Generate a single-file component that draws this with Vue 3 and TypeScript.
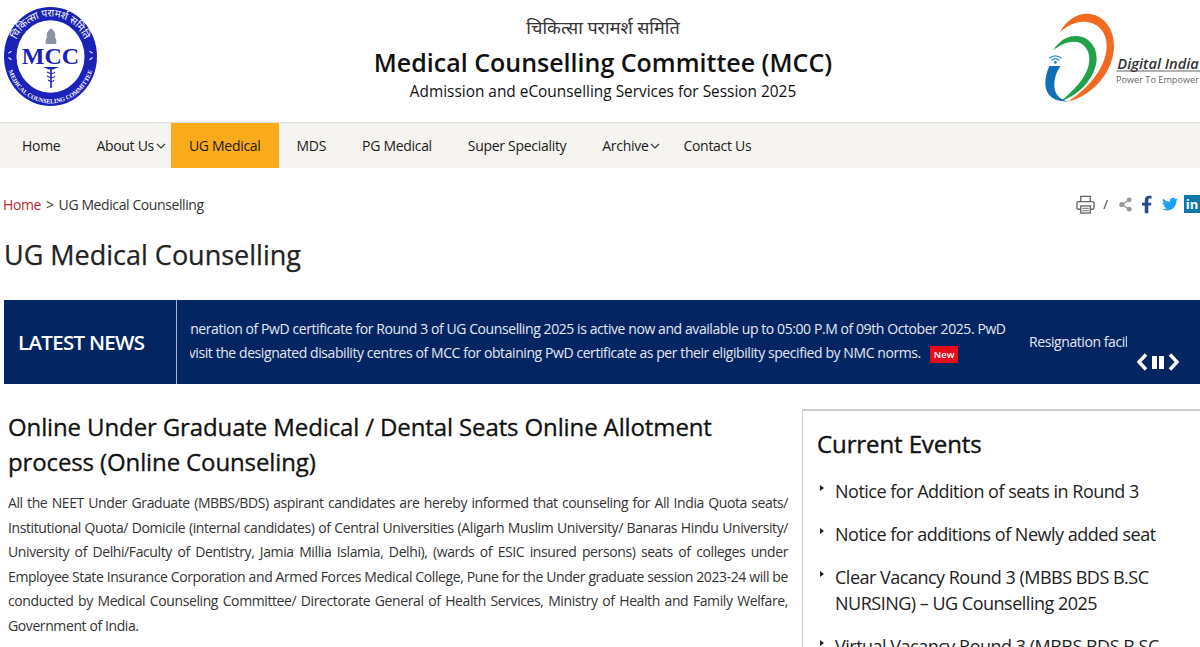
<script setup lang="ts">
const nav = [
  { label: 'Home' },
  { label: 'About Us', caret: true },
  { label: 'UG Medical', active: true },
  { label: 'MDS' },
  { label: 'PG Medical' },
  { label: 'Super Speciality' },
  { label: 'Archive', caret: true },
  { label: 'Contact Us' },
]
const events = [
  'Notice for Addition of seats in Round 3',
  'Notice for additions of Newly added seat',
  'Clear Vacancy Round 3 (MBBS BDS B.SC NURSING) – UG Counselling 2025',
  'Virtual Vacancy Round 3 (MBBS BDS B.SC NURSING) – UG Counselling 2025',
]
</script>

<template>
  <div class="page">
    <header class="head">
      <svg class="mcc" viewBox="0 0 100 110" width="100" height="110" role="img" aria-label="MCC logo">
        <defs>
          <path id="arcTop" d="M -37.500 0 A 37.500 37.500 0 0 1 37.500 0" />
          <path id="arcBottom" d="M -44 0 A 44 44 0 0 0 44 0" />
        </defs>
        <g transform="translate(50.500 56.500) scale(1 1.065)">
          <circle r="46.500" fill="#1a22b8" />
          <circle r="34" fill="#fff" />
          <text class="arc-hi"><textPath href="#arcTop" startOffset="50%" text-anchor="middle">चिकित्सा परामर्श समिति</textPath></text>
          <text class="arc-en"><textPath href="#arcBottom" startOffset="50%" text-anchor="middle">MEDICAL COUNSELING COMMITTEE</textPath></text>
          <path d="M-42 -3l3-2M-42 1l3 2M39 -5l3 2M39 3l3-2" stroke="#fff" stroke-width="1" />
        </g>
        <path d="M-5 22c-1-3 0-5 1-7-1-2 0-5 1.500-6 1-3 4-3 5 0 1.500 1 2.500 4 1.500 6 1 2 2 4 1 7z" transform="translate(51 22)" fill="#8a93a8" />
        <text x="50.500" y="64" class="mcc-t" text-anchor="middle">MCC</text>
        <path d="M43 67h16l-6 2.500h-4zM50.200 67h1.600v21h-1.600z" fill="#1a22b8" />
        <path d="M47 72c4 2 7 2 8 0M47 76c4 2 7 2 8 0M48 80c3 2 5 2 6 0" fill="none" stroke="#1a22b8" stroke-width="1.200" />
      </svg>
      <div class="brand">
        <div class="hi">चिकित्सा परामर्श समिति</div>
        <h1>Medical Counselling Committee (MCC)</h1>
        <p>Admission and eCounselling Services for Session 2025</p>
      </div>
      <svg class="di" viewBox="0 0 600 360" width="200" height="120" role="img" aria-label="Digital India logo">
        <path d="M180 96C198 60 232 40 262 41C312 44 343 86 342 140C340 215 280 285 205 305C268 262 315 205 320 145C323 92 288 64 250 65C224 66 200 78 180 96Z" fill="#f26a21" />
        <path d="M159 152C176 124 200 108 226 108C266 108 291 140 290 178C287 232 240 285 180 305C225 270 266 225 268 180C269 146 248 124 220 125C198 126 176 136 159 152Z" fill="#1fa24a" />
        <path d="M148 198H182C170 214 163 234 163 255C163 280 176 298 203 304C168 306 136 290 136 250C136 232 141 214 148 198Z" fill="#0f6fb8" />
        <g fill="none" stroke="#2a8ccb" stroke-width="4">
          <path d="M148 175C158 165 174 165 184 175" />
          <path d="M154 181C161 175 171 175 178 181" />
        </g>
        <circle cx="166" cy="187" r="4.500" fill="#2a8ccb" />
        <text x="352" y="208" class="di-t">Digital India</text>
        <path d="M350 213H600" stroke="#444" stroke-width="2.500" />
        <text x="348" y="248" class="di-s">Power To Empower</text>
      </svg>
    </header>

    <nav class="nav">
      <a v-for="n in nav" :key="n.label" class="nav-item" :class="{ active: n.active, 'has-caret': n.caret }">
        {{ n.label }}
        <svg v-if="n.caret" viewBox="0 0 10 6" width="10" height="6" class="caret"><path d="M1 1l4 4 4-4" fill="none" stroke="#333" stroke-width="1.100" /></svg>
      </a>
    </nav>

    <div class="crumbs">
      <div class="trail"><a>Home</a><span class="sep">&gt;</span><span>UG Medical Counselling</span></div>
      <div class="tools">
        <svg viewBox="0 0 20 20" width="19" height="19" class="print">
          <path d="M5 7V1.500h10V7" fill="none" stroke="#666" stroke-width="1.400" />
          <rect x="1" y="7" width="18" height="8" rx="1.500" fill="#fff" stroke="#666" stroke-width="1.400" />
          <rect x="5" y="11.500" width="10" height="7.500" fill="#fff" stroke="#666" stroke-width="1.400" />
          <path d="M6.500 14h7M6.500 16.500h7" stroke="#666" stroke-width="1" />
        </svg>
        <span class="slash">/</span>
        <svg viewBox="0 0 14 16" width="13" height="15" class="share">
          <path d="M3 8l8-5M3 8l8 5" stroke="#999" stroke-width="1.500" />
          <circle cx="3" cy="8" r="2.800" fill="#999" /><circle cx="11" cy="3" r="2.600" fill="#999" /><circle cx="11" cy="13" r="2.600" fill="#999" />
        </svg>
        <svg viewBox="0 0 11 19" width="10" height="19" class="fb"><path d="M3 19V10.500H0V7.500H3V5C3 1.800 5 0 7.600 0H10.500V3H8.500C7.300 3 7 3.600 7 4.800V7.500H10.400L9.900 10.500H7V19Z" fill="#2a4a8c" /></svg>
        <svg viewBox="0 0 24 20" width="16" height="15" class="tw"><path d="M24 2.400c-.9.400-1.800.7-2.800.8 1-.6 1.800-1.600 2.200-2.700-1 .6-2 1-3.100 1.200C19.300.6 18 0 16.600 0c-2.700 0-4.900 2.200-4.900 4.900 0 .4 0 .8.100 1.100C7.700 5.800 4.100 3.900 1.700.9c-.4.700-.7 1.600-.7 2.500 0 1.700.9 3.200 2.200 4.100-.8 0-1.600-.2-2.200-.6v.1c0 2.400 1.700 4.400 3.900 4.800-.4.100-.8.200-1.300.2-.3 0-.6 0-.9-.1.600 2 2.400 3.400 4.600 3.400-1.700 1.300-3.800 2.100-6.100 2.100-.4 0-.8 0-1.200-.1C2.200 18.300 4.800 19.100 7.500 19.100c9.100 0 14-7.500 14-14v-.6c1-.7 1.800-1.500 2.500-2.100z" fill="#1da1f2" /></svg>
        <span class="li">in</span>
      </div>
    </div>

    <h2 class="title">UG Medical Counselling</h2>

    <section class="news">
      <div class="news-label">LATEST NEWS</div>
      <div class="ticker">
        <div class="track">
          <div class="tick-one">
            <div>Generation of PwD certificate for Round 3 of UG Counselling 2025 is active now and available up to 05:00 P.M of 09th October 2025. PwD</div>
            <div>to visit the designated disability centres of MCC for obtaining PwD certificate as per their eligibility specified by NMC norms.<span class="new">New</span></div>
          </div>
          <div class="tick-two">Resignation facility for Round 3</div>
        </div>
      </div>
      <div class="controls">
        <svg viewBox="0 0 12 18" width="12" height="18"><path d="M10 1.500L3 9l7 7.500" fill="none" stroke="#fff" stroke-width="3.400" /></svg>
        <span class="pause"><i></i><i></i></span>
        <svg viewBox="0 0 12 18" width="12" height="18"><path d="M2 1.500L9 9l-7 7.500" fill="none" stroke="#fff" stroke-width="3.400" /></svg>
      </div>
    </section>

    <main class="cols">
      <article class="intro">
        <h3>Online Under Graduate Medical / Dental Seats Online Allotment process (Online Counseling)</h3>
        <p>All the NEET Under Graduate (MBBS/BDS) aspirant candidates are hereby informed that counseling for All India Quota seats/ Institutional Quota/ Domicile (internal candidates) of Central Universities (Aligarh Muslim University/ Banaras Hindu University/ University of Delhi/Faculty of Dentistry, Jamia Millia Islamia, Delhi), (wards of ESIC insured persons) seats of colleges under Employee State Insurance Corporation and Armed Forces Medical College, Pune for the Under graduate session 2023-24 will be conducted by Medical Counseling Committee/ Directorate General of Health Services, Ministry of Health and Family Welfare, Government of India.</p>
      </article>
      <aside class="events">
        <h3>Current Events</h3>
        <ul>
          <li v-for="e in events" :key="e">{{ e }}</li>
        </ul>
      </aside>
    </main>
  </div>
</template>

<style>
html, body { margin: 0; padding: 0; background: #fff; overflow: hidden; }
</style>

<style scoped>
.page {
  width: 1200px;
  height: 647px;
  overflow: hidden;
  font-family: "Open Sans", "Noto Sans", "DejaVu Sans", sans-serif;
  color: #222;
}
.head {
  height: 123px;
  display: flex;
  align-items: flex-start;
  box-sizing: border-box;
  border-bottom: 1px solid #ddd;
}
.mcc { flex: none; }
.brand {
  flex: 1;
  text-align: center;
  padding-left: 106px;
  padding-top: 14px;
}
.hi { font-size: 18px; line-height: 28px; color: #333; font-family: "Liberation Serif", "Noto Sans", serif; }
.brand h1 { margin: 2px 0 0; font-size: 25px; line-height: 36px; font-weight: 600; color: #111; }
.brand p { margin: 1px 0 0; font-size: 15.400px; line-height: 22px; color: #111; }
.di { flex: none; }
.arc-hi { font-size: 10px; fill: #fff; }
.arc-en { font-size: 6px; font-weight: 700; fill: #fff; font-family: "Liberation Serif", serif; }
.mcc-t { font-family: "Liberation Serif", serif; font-weight: 700; font-size: 24px; fill: #1a22b8; }
.di-t { font-family: "Open Sans", sans-serif; font-style: italic; font-weight: 600; font-size: 44px; fill: #333; }
.di-s { font-family: "Open Sans", sans-serif; font-size: 27.500px; fill: #666; }

.nav {
  height: 45px;
  background: #f6f4f0;
  display: flex;
  padding-left: 4px;
  letter-spacing: -0.3px;
}
.nav-item {
  display: flex;
  align-items: center;
  padding: 0 18px;
  font-size: 14px;
  color: #1a1a1a;
}
.nav-item.has-caret { padding-right: 5px; gap: 2px; }
.nav-item.active { background: #fbab19; }

.crumbs {
  display: flex;
  justify-content: space-between;
  align-items: center;
  height: 28px;
  margin-top: 22px;
  padding-left: 3px;
  font-size: 14px;
  letter-spacing: -0.4px;
  color: #333;
}
.trail { display: flex; gap: 5px; }
.trail a { color: #c0272d; }
.tools { display: flex; align-items: center; letter-spacing: 0; }
.print { margin-right: 8px; }
.slash { font-size: 13px; margin-right: 11px; }
.share { margin-right: 10px; }
.fb { margin-right: 10px; }
.tw { margin-right: 6px; }
.li {
  width: 16px;
  height: 18px;
  background: #0e76a8;
  color: #fff;
  font-size: 13px;
  font-weight: 700;
  line-height: 18px;
  text-align: center;
}
.title {
  margin: 19px 0 0 4px;
  font-size: 27px;
  line-height: 36px;
  font-weight: 400;
  -webkit-text-stroke: 0.25px #222;
  color: #222;
}
.news {
  margin: 27px 0 0 4px;
  height: 84px;
  background: #032663;
  display: flex;
  position: relative;
  color: #fff;
}
.news-label {
  width: 173px;
  flex: none;
  box-sizing: border-box;
  border-right: 1px solid #a9b4d6;
  padding-left: 14px;
  font-size: 20.500px;
  letter-spacing: -0.7px;
  font-weight: 600;
  line-height: 84px;
}
.ticker {
  margin-left: 13px;
  width: 937px;
  overflow: hidden;
}
.track {
  height: 100%;
  display: flex;
  align-items: center;
  margin-left: -17px;
  padding-bottom: 2px;
  box-sizing: border-box;
  font-size: 14px;
  letter-spacing: -0.42px;
  color: #e4e9f4;
  white-space: nowrap;
}
.tick-one { line-height: 24px; flex: none; width: 820px; }
.tick-two { margin-left: 36px; flex: none; }
.new {
  display: inline-block;
  background: #e8091a;
  color: #fff;
  font-size: 9.500px;
  letter-spacing: 0;
  font-weight: 600;
  line-height: 17px;
  padding: 0 4px;
  margin-left: 9px;
  vertical-align: middle;
}
.controls {
  position: absolute;
  left: 1132px;
  top: 53px;
  display: flex;
  align-items: center;
  gap: 4px;
}
.pause { display: flex; gap: 2px; }
.pause i { width: 5px; height: 13px; background: #fff; display: block; }

.cols { display: flex; margin-top: 25px; align-items: flex-start; }
.intro { width: 780px; margin-left: 8px; flex: none; }
.intro h3 {
  margin: 0;
  font-size: 24px;
  letter-spacing: -0.12px;
  line-height: 35px;
  font-weight: 400;
  -webkit-text-stroke: 0.3px #111;
  color: #111;
}
.intro p {
  margin: 12px 0 0;
  font-size: 14px;
  letter-spacing: -0.4px;
  line-height: 24.500px;
  text-align: justify;
  color: #333;
}
.events {
  margin-left: 14px;
  flex: 1;
  border-top: 2px solid #ccc;
  border-left: 1px solid #ccc;
  padding: 15px 0 0 14px;
}
.events h3 { margin: 0; font-size: 24px; letter-spacing: -0.1px; line-height: 36px; font-weight: 400; -webkit-text-stroke: 0.4px #111; color: #111; }
.events ul { margin: 16px 0 0; padding: 0; list-style: none; }
.events li {
  position: relative;
  padding-left: 18px;
  font-size: 18px;
  letter-spacing: -0.5px;
  line-height: 26px;
  margin-bottom: 17px;
  color: #222;
}
.events li::before {
  content: "";
  position: absolute;
  left: 3px;
  top: 7px;
  border-left: 4px solid #222;
  border-top: 3.500px solid transparent;
  border-bottom: 3.500px solid transparent;
}
</style>
